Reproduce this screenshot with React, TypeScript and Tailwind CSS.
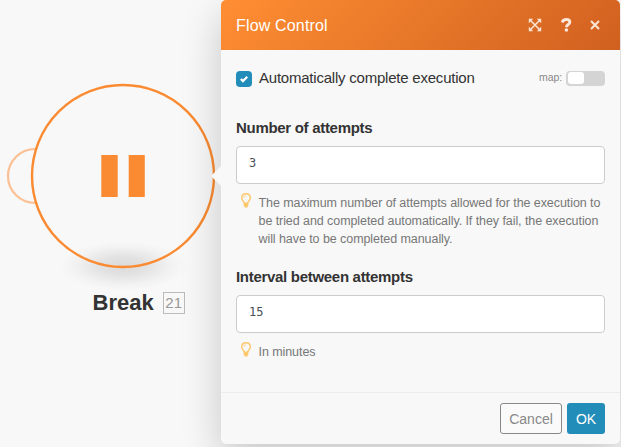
import type { ReactNode } from 'react'

const ExpandIcon = () => (
  <svg
    className="h-[14px] w-[14px]"
    viewBox="0 0 14 14"
    fill="none"
    stroke="currentColor"
    strokeWidth="1.5"
  >
    <path d="M1.8 1.8 12.2 12.2M12.2 1.8 1.8 12.2" />
    <path
      d="M.8.8h4.4L.8 5.2zM13.2.8H8.8l4.4 4.4zM.8 13.2h4.4L.8 8.8zM13.2 13.2H8.8l4.4-4.4z"
      fill="currentColor"
      stroke="none"
    />
  </svg>
)

const QuestionIcon = () => (
  <svg
    className="h-[14px] w-[11px]"
    viewBox="0 0 11 14"
    fill="none"
    stroke="currentColor"
  >
    <path
      d="M1.2 4.4C1.9 2.4 3.4 1.6 5.3 1.6c2.1 0 3.5 1.1 3.5 2.7 0 2.3-3.3 2.2-3.3 4.9"
      strokeWidth="3"
    />
    <circle cx="5.4" cy="12" r="1.8" fill="currentColor" stroke="none" />
  </svg>
)

const CloseIcon = () => (
  <svg
    className="h-[10px] w-[10px]"
    viewBox="0 0 10 10"
    fill="none"
    stroke="currentColor"
    strokeWidth="2"
  >
    <path d="m1 1 8 8M9 1 1 9" />
  </svg>
)

const BulbIcon = () => (
  <svg
    className="mt-[-1px] h-[15px] w-[10px] shrink-0 text-[#fdc76b]"
    viewBox="0 0 10 15"
    fill="none"
    stroke="currentColor"
    strokeWidth="1.4"
  >
    <path d="M3.3 10.2C3.3 8.6.7 7.6.7 4.9.7 2.4 2.6.7 5 .7s4.3 1.7 4.3 4.2c0 2.7-2.6 3.7-2.6 5.3z" />
    <path d="M2.8 4.8C2.8 3.5 3.7 2.8 5 2.8" strokeWidth="0.8" />
    <path d="M2.6 12h4.8M3.4 13.7h3.2" strokeWidth="1.8" />
  </svg>
)

const FlowNode = () => (
  <div className="w-[221px] shrink-0 pt-[78px]">
    <svg className="block h-[213px] w-[221px]" viewBox="0 78 221 213">
      <defs>
        <radialGradient id="node-shadow">
          <stop offset="0" stopColor="#000" stopOpacity="0.12" />
          <stop offset="0.35" stopColor="#000" stopOpacity="0.09" />
          <stop offset="0.75" stopColor="#000" stopOpacity="0.025" />
          <stop offset="1" stopColor="#000" stopOpacity="0" />
        </radialGradient>
      </defs>
      <ellipse cx="123" cy="266" rx="64" ry="25" fill="url(#node-shadow)" />
      <path
        d="M35 149a27 27 0 0 0 0 54"
        fill="none"
        stroke="#fbc093"
        strokeWidth="2.2"
      />
      <circle
        cx="123"
        cy="176"
        r="91"
        fill="none"
        stroke="#fa8b32"
        strokeWidth="2.4"
      />
      <path d="M101.3 155h16.4v42h-16.4zM128.7 155h16.1v42h-16.1z" fill="#fa8b32" />
    </svg>
    <div className="flex items-center pl-[92.5px]">
      <span className="text-[22px] leading-6 font-bold text-[#333]">Break</span>
      <span className="ml-[9px] flex h-[22px] w-[22px] items-center justify-center border border-[#bbb] text-[15px] text-[#999]">
        21
      </span>
    </div>
  </div>
)

type FieldProps = {
  label: string
  value: string
  hint: ReactNode
}

const Field = ({ label, value, hint }: FieldProps) => (
  <div>
    <div className="text-[15px] leading-[18px] font-bold tracking-[-0.3px] text-[#333]">
      {label}
    </div>
    <div className="mt-[9px] flex h-[38px] items-center rounded-[4px] border border-[#ccc] bg-white px-3 pb-[5px] font-['DejaVu_Sans_Mono',monospace] text-[12px] text-[#495057]">
      {value}
    </div>
    <div className="mt-[10px] flex pl-[4.5px]">
      <BulbIcon />
      <div className="ml-2 text-[12.5px] leading-[18px] tracking-[-0.07px] whitespace-nowrap text-[#777]">
        {hint}
      </div>
    </div>
  </div>
)

const FlowControlPanel = () => (
  <div className="relative flex h-[444px] w-[399px] shrink-0 flex-col rounded-[5px] bg-[#f8f8f8] shadow-[0_15px_40px_rgba(0,0,0,0.2)]">
    <div className="absolute top-[166px] -left-[10px] border-y-[10px] border-r-[10px] border-y-transparent border-r-[#f8f8f8]" />
    <div className="flex h-[50px] items-center rounded-t-[5px] bg-linear-135 from-[#ff8e33] to-[#d0601f] pr-[20px] pl-[15px] text-[#fbe6d8]">
      <span className="flex-1 pt-[2px] text-[16px] tracking-[0.17px] text-white">
        Flow Control
      </span>
      <ExpandIcon />
      <span className="ml-[19px]">
        <QuestionIcon />
      </span>
      <span className="ml-[18px]">
        <CloseIcon />
      </span>
    </div>

    <div className="h-[342px] px-[15px] pt-[18px]">
      <div className="flex h-5 items-center">
        <span className="mt-px flex h-4 w-4 items-center justify-center rounded-[4px] bg-[#238db9]">
          <svg
            className="h-2 w-2"
            viewBox="0 0 8 8"
            fill="none"
            stroke="#fff"
            strokeWidth="2.2"
          >
            <path d="m.8 4 2.1 2.1 4.4-4.4" />
          </svg>
        </span>
        <span className="ml-[7px] flex-1 text-[15px] leading-5 tracking-[-0.22px] text-[#333]">
          Automatically complete execution
        </span>
        <span className="text-[10.5px] tracking-[-0.1px] text-[#888]">
          map:
        </span>
        <span className="ml-[4px] flex h-[15px] w-[39px] rounded-[4px] bg-[#d4d4d4] p-[1.5px]">
          <span className="w-[16px] rounded-[3px] bg-white" />
        </span>
      </div>
      <div className="mt-[31px] flex flex-col gap-5">
        <Field
          label="Number of attempts"
          value="3"
          hint={
            <>
              The maximum number of attempts allowed for the execution to
              <br />
              be tried and completed automatically. If they fail, the execution
              <br />
              will have to be completed manually.
            </>
          }
        />
        <Field label="Interval between attempts" value="15" hint="In minutes" />
      </div>
    </div>

    <div className="flex flex-1 justify-end gap-[5px] border-t border-[#ececec] px-[15px] pt-[10px]">
      <button className="h-[31px] w-[62px] rounded-[3px] border border-[#888] bg-[#fafafa] pt-px text-[14px] text-[#888]">
        Cancel
      </button>
      <button className="h-[31px] w-[38px] rounded-[3px] bg-[#238db9] pt-px text-[14px] text-white">
        OK
      </button>
    </div>
  </div>
)

export default function App() {
  return (
    <div className="flex h-[447px] w-[621px] overflow-hidden bg-[#f8f8f8] font-['Liberation_Sans',Arial,sans-serif]">
      <FlowNode />
      <FlowControlPanel />
    </div>
  )
}
